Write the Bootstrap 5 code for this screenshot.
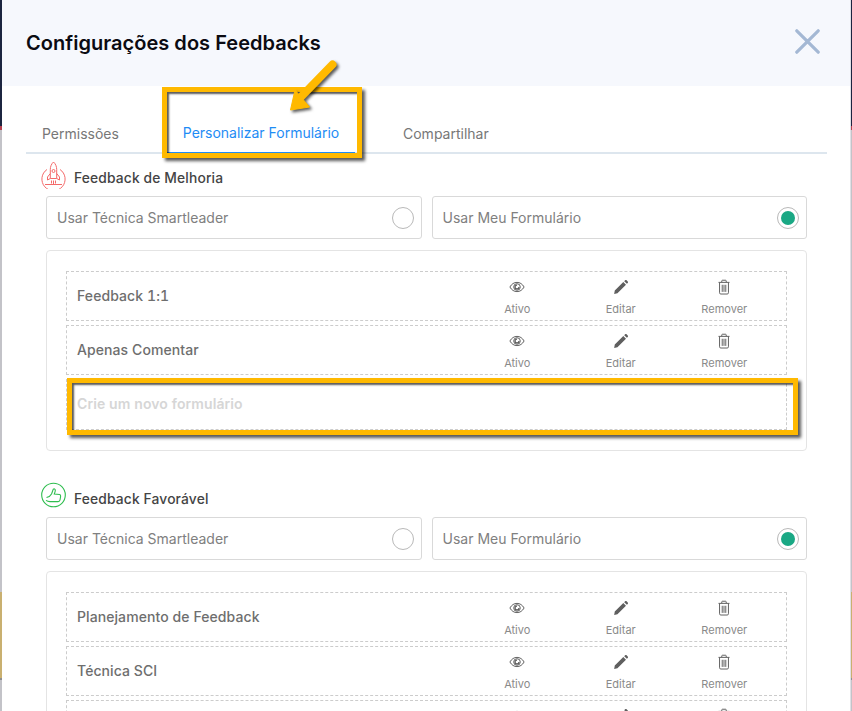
<!DOCTYPE html>
<html lang="pt">
<head>
<meta charset="utf-8">
<title>Configurações dos Feedbacks</title>
<link href="https://cdn.jsdelivr.net/npm/bootstrap@5.3.0/dist/css/bootstrap.min.css" rel="stylesheet">
<style>
html,body{height:711px;overflow:hidden}
body{font-family:Inter,"Liberation Sans",sans-serif;color:#666;padding-left:2px;
background:linear-gradient(to bottom,#1c2540 0 126px,#b5404f 126px 130px,#c3c3c8 130px 592px,#c9b070 592px 678px,#8f8f8f 678px 680px,#c3c3c8 680px)}
.sheet{width:849px;height:711px;background:#fff;overflow:hidden;border-right:1px solid #e0e0e6}
.sheet-head{height:86px;background:#f6f8fd;padding:0 30px 0 24px}
.sheet-title{font-size:20px;font-weight:600;color:#0b0b12;margin:0;letter-spacing:.03px}
.close-x{width:25px;height:25px;display:block;margin-bottom:4px}
.tabbar{margin:0 23px 0 24px;height:68px;border-bottom:2px solid #dde6ee;align-items:flex-end;flex-wrap:nowrap}
.tab-item{font-size:14px;line-height:17px;color:#777;padding:0 16px 10px;height:42px;display:flex;align-items:flex-end;position:relative;text-decoration:none}
.tab-perm{width:141px}
.tab-form{width:188px;color:#1e8cf5;border-bottom:2px solid #1e8cf5;margin-bottom:-2px;justify-content:center;padding:0 0 11px}
.tab-share{margin-left:32px}
.callout{position:absolute;border:5px solid #ffb900;box-shadow:3px 3px 3px rgba(0,0,0,.65),inset 2px 2px 2px rgba(0,0,0,.65);pointer-events:none}
.callout-tab{left:-5px;right:-7px;top:-25px;bottom:-6px}
.callout-row{left:0;right:-12px;top:-2px;bottom:-6px}
.arrow-mark{position:absolute;left:117px;top:-57px;width:60px;height:62px;overflow:visible}
.sect-head{height:42px;padding-left:39px;gap:8px;font-size:13.8px;font-weight:500;color:#444;letter-spacing:.15px}
.sect-head svg{width:25px;height:28px;flex:none}
.sect-label{margin-top:7px}
.choices{margin:0 43px 0 44px;gap:10px}
.choice{flex:1 1 0;height:43px;border:1px solid #d9d9d9;border-radius:3px;padding:0 7px 0 10px;font-size:14px;color:#808080;background:#fff}
.dot{width:22px;height:22px;border:1px solid #b9b9b9;border-radius:50%;background:#fff;display:flex;align-items:center;justify-content:center;flex:none}
.dot-on::after{content:"";width:14px;height:14px;border-radius:50%;background:#1aa884}
.panel{margin:11px 43px 0 44px;padding:20px 19px 20px;border:1px solid #e4e4e4;border-radius:4px;gap:4px}
.form-row{height:50px;border:1px dashed #ccc;padding-left:10px;position:relative;flex:none}
.form-row.tall{height:51px}
.form-name{font-size:14px;font-weight:500;color:#6e6e6e;flex:1;letter-spacing:.08px;font-variant-numeric:tabular-nums;margin-bottom:2px}
.form-new{color:#d6d6d6;font-weight:600}
.act{width:103.5px;text-align:center;font-size:11px;line-height:14px;color:#8a8a8a;flex:none;padding-top:7px}
.act svg{display:block;margin:0 auto 7px;width:16px;height:16px}
.acts{margin-right:10px}
.sect-two{margin-top:24px}
</style>
</head>
<body>
<div class="sheet">
  <div class="sheet-head d-flex align-items-center justify-content-between">
    <h5 class="sheet-title">Configurações dos Feedbacks</h5>
    <svg class="close-x" viewBox="0 0 25 25" fill="none" stroke="#a4b8d4" stroke-width="3.200" stroke-linecap="round"><path d="M1.800 1.800 23.200 23.200M23.200 1.800 1.800 23.200"/></svg>
  </div>

  <div class="nav tabbar">
    <a class="tab-item tab-perm">Permissões</a>
    <a class="tab-item tab-form">Personalizar Formulário
      <span class="callout callout-tab"></span>
      <svg class="arrow-mark" viewBox="0 0 60 62" style="filter:drop-shadow(2px 2px 1.500px rgba(0,0,0,.65))">
        <path d="M48.500 9.500 13 46" stroke="#ffb900" stroke-width="8" stroke-linecap="round" fill="none"/>
        <path d="M11 35 6.500 55 25.500 52Z" fill="#ffb900" stroke="#ffb900" stroke-linejoin="round"/>
      </svg>
    </a>
    <a class="tab-item tab-share">Compartilhar</a>
  </div>

  <div class="sect-head d-flex align-items-center">
    <svg viewBox="0 0 25 28" fill="none" stroke="#f46a6a" stroke-width="1"><path d="M6 8.500a11.600 11.600 0 1 0 13 0"/><path d="M12.500 1c2.200 2 3.200 4.700 3.200 7.500v9H9.300v-9C9.300 5.700 10.300 3 12.500 1Z"/><circle cx="12.500" cy="10" r="1.500"/><path d="M9.300 12.500 6.500 16v3l2.800-1.500M15.700 12.500 18.500 16v3l-2.800-1.500M10.500 19.500v3M14.500 19.500v3M12.500 19.500v4.500M4 23.500h17"/></svg>
    <span class="sect-label">Feedback de Melhoria</span>
  </div>
  <div class="choices d-flex">
    <div class="choice d-flex align-items-center justify-content-between"><span>Usar Técnica Smartleader</span><span class="dot"></span></div>
    <div class="choice d-flex align-items-center justify-content-between"><span>Usar Meu Formulário</span><span class="dot dot-on"></span></div>
  </div>
  <div class="panel card d-flex flex-column">
    <div class="form-row d-flex align-items-center">
      <div class="form-name">Feedback 1:1</div>
      <div class="acts d-flex align-self-start">
        <div class="act"><svg viewBox="0 0 18 18" fill="none" stroke="#5f5f5f" stroke-width="1.100"><path d="M1 9c2-3.500 4.800-5.200 8-5.200S15 5.500 17 9c-2 3.500-4.800 5.200-8 5.200S3 12.500 1 9Z"/><circle cx="9" cy="9" r="3.700"/><path d="M9 6.800A2.200 2.200 0 1 0 11.200 9" stroke-width="1.400"/></svg>Ativo</div>
        <div class="act"><svg viewBox="0 0 18 18" fill="#5f5f5f"><path d="M2 13 11.600 3.400l3 3L5 16l-3.700.8ZM12.600 2.400l1-1c.5-.5 1.200-.5 1.700 0l1.300 1.300c.5.500.5 1.200 0 1.700l-1 1Z"/></svg>Editar</div>
        <div class="act"><svg viewBox="0 0 18 18" fill="none" stroke="#5f5f5f" stroke-width="1.100"><path d="M2.800 3.800h12.400M6.500 3.500V2.200c0-.5.300-.8.800-.8h3.400c.5 0 .8.300.8.800v1.300M4 4v11.500c0 .9.500 1.400 1.400 1.400h7.200c.9 0 1.400-.5 1.400-1.400V4M7 6.500v8M9 6.500v8M11 6.500v8"/></svg>Remover</div>
      </div>
    </div>
    <div class="form-row d-flex align-items-center">
      <div class="form-name">Apenas Comentar</div>
      <div class="acts d-flex align-self-start">
        <div class="act"><svg viewBox="0 0 18 18" fill="none" stroke="#5f5f5f" stroke-width="1.100"><path d="M1 9c2-3.500 4.800-5.200 8-5.200S15 5.500 17 9c-2 3.500-4.800 5.200-8 5.200S3 12.500 1 9Z"/><circle cx="9" cy="9" r="3.700"/><path d="M9 6.800A2.200 2.200 0 1 0 11.200 9" stroke-width="1.400"/></svg>Ativo</div>
        <div class="act"><svg viewBox="0 0 18 18" fill="#5f5f5f"><path d="M2 13 11.600 3.400l3 3L5 16l-3.700.8ZM12.600 2.400l1-1c.5-.5 1.200-.5 1.700 0l1.300 1.300c.5.500.5 1.200 0 1.700l-1 1Z"/></svg>Editar</div>
        <div class="act"><svg viewBox="0 0 18 18" fill="none" stroke="#5f5f5f" stroke-width="1.100"><path d="M2.800 3.800h12.400M6.500 3.500V2.200c0-.5.300-.8.800-.8h3.400c.5 0 .8.300.8.800v1.300M4 4v11.500c0 .9.500 1.400 1.400 1.400h7.200c.9 0 1.400-.5 1.400-1.400V4M7 6.500v8M9 6.500v8M11 6.500v8"/></svg>Remover</div>
      </div>
    </div>
    <div class="form-row tall d-flex align-items-center">
      <div class="form-name form-new">Crie um novo formulário</div>
      <span class="callout callout-row"></span>
    </div>
  </div>

  <div class="sect-head sect-two d-flex align-items-center">
    <svg viewBox="0 0 25 28" fill="none" stroke="#2ebd4e" stroke-width="1.100"><circle cx="12.500" cy="13" r="11.800"/><path d="M5.500 15.500c2.500-.5 4-1.500 5-3.500.7-1.500 1-3 1.800-4.800.7-.6 2-.3 2 1 0 1.300-.5 2.500-1 3.800l5.200.5c1 .2 1.300 1 1.100 2l-.6 3.500c-.2 1-.8 1.600-1.800 1.600H9c-1.500 0-3-.5-4-1.200"/></svg>
    <span class="sect-label">Feedback Favorável</span>
  </div>
  <div class="choices d-flex">
    <div class="choice d-flex align-items-center justify-content-between"><span>Usar Técnica Smartleader</span><span class="dot"></span></div>
    <div class="choice d-flex align-items-center justify-content-between"><span>Usar Meu Formulário</span><span class="dot dot-on"></span></div>
  </div>
  <div class="panel card d-flex flex-column">
    <div class="form-row d-flex align-items-center">
      <div class="form-name">Planejamento de Feedback</div>
      <div class="acts d-flex align-self-start">
        <div class="act"><svg viewBox="0 0 18 18" fill="none" stroke="#5f5f5f" stroke-width="1.100"><path d="M1 9c2-3.500 4.800-5.200 8-5.200S15 5.500 17 9c-2 3.500-4.800 5.200-8 5.200S3 12.500 1 9Z"/><circle cx="9" cy="9" r="3.700"/><path d="M9 6.800A2.200 2.200 0 1 0 11.200 9" stroke-width="1.400"/></svg>Ativo</div>
        <div class="act"><svg viewBox="0 0 18 18" fill="#5f5f5f"><path d="M2 13 11.600 3.400l3 3L5 16l-3.700.8ZM12.600 2.400l1-1c.5-.5 1.200-.5 1.700 0l1.300 1.300c.5.500.5 1.200 0 1.700l-1 1Z"/></svg>Editar</div>
        <div class="act"><svg viewBox="0 0 18 18" fill="none" stroke="#5f5f5f" stroke-width="1.100"><path d="M2.800 3.800h12.400M6.500 3.500V2.200c0-.5.300-.8.800-.8h3.400c.5 0 .8.300.8.800v1.300M4 4v11.500c0 .9.500 1.400 1.400 1.400h7.200c.9 0 1.400-.5 1.400-1.400V4M7 6.500v8M9 6.500v8M11 6.500v8"/></svg>Remover</div>
      </div>
    </div>
    <div class="form-row d-flex align-items-center">
      <div class="form-name">Técnica SCI</div>
      <div class="acts d-flex align-self-start">
        <div class="act"><svg viewBox="0 0 18 18" fill="none" stroke="#5f5f5f" stroke-width="1.100"><path d="M1 9c2-3.500 4.800-5.200 8-5.200S15 5.500 17 9c-2 3.500-4.800 5.200-8 5.200S3 12.500 1 9Z"/><circle cx="9" cy="9" r="3.700"/><path d="M9 6.800A2.200 2.200 0 1 0 11.200 9" stroke-width="1.400"/></svg>Ativo</div>
        <div class="act"><svg viewBox="0 0 18 18" fill="#5f5f5f"><path d="M2 13 11.600 3.400l3 3L5 16l-3.700.8ZM12.600 2.400l1-1c.5-.5 1.200-.5 1.700 0l1.300 1.300c.5.500.5 1.200 0 1.700l-1 1Z"/></svg>Editar</div>
        <div class="act"><svg viewBox="0 0 18 18" fill="none" stroke="#5f5f5f" stroke-width="1.100"><path d="M2.800 3.800h12.400M6.500 3.500V2.200c0-.5.300-.8.800-.8h3.400c.5 0 .8.300.8.800v1.300M4 4v11.500c0 .9.500 1.400 1.400 1.400h7.200c.9 0 1.400-.5 1.400-1.400V4M7 6.500v8M9 6.500v8M11 6.500v8"/></svg>Remover</div>
      </div>
    </div>
    <div class="form-row d-flex align-items-center">
      <div class="form-name"></div>
      <div class="acts d-flex align-self-start">
        <div class="act"><svg viewBox="0 0 18 18" fill="none" stroke="#5f5f5f" stroke-width="1.100"><path d="M1 9c2-3.500 4.800-5.200 8-5.200S15 5.500 17 9c-2 3.500-4.800 5.200-8 5.200S3 12.500 1 9Z"/><circle cx="9" cy="9" r="3.700"/></svg></div>
        <div class="act"><svg viewBox="0 0 18 18" fill="#5f5f5f"><path d="M2 13 11.600 3.400l3 3L5 16l-3.700.8ZM12.600 2.400l1-1c.5-.5 1.200-.5 1.700 0l1.300 1.300c.5.500.5 1.200 0 1.700l-1 1Z"/></svg></div>
        <div class="act"><svg viewBox="0 0 18 18" fill="none" stroke="#5f5f5f" stroke-width="1.100"><path d="M2.800 3.800h12.400M6.500 3.500V2.200c0-.5.300-.8.800-.8h3.400c.5 0 .8.300.8.800v1.300M4 4v11.500c0 .9.500 1.400 1.400 1.400h7.200c.9 0 1.400-.5 1.400-1.400V4"/></svg></div>
      </div>
    </div>
  </div>
</div>
<script src="https://cdn.jsdelivr.net/npm/bootstrap@5.3.0/dist/js/bootstrap.bundle.min.js"></script>
</body>
</html>
